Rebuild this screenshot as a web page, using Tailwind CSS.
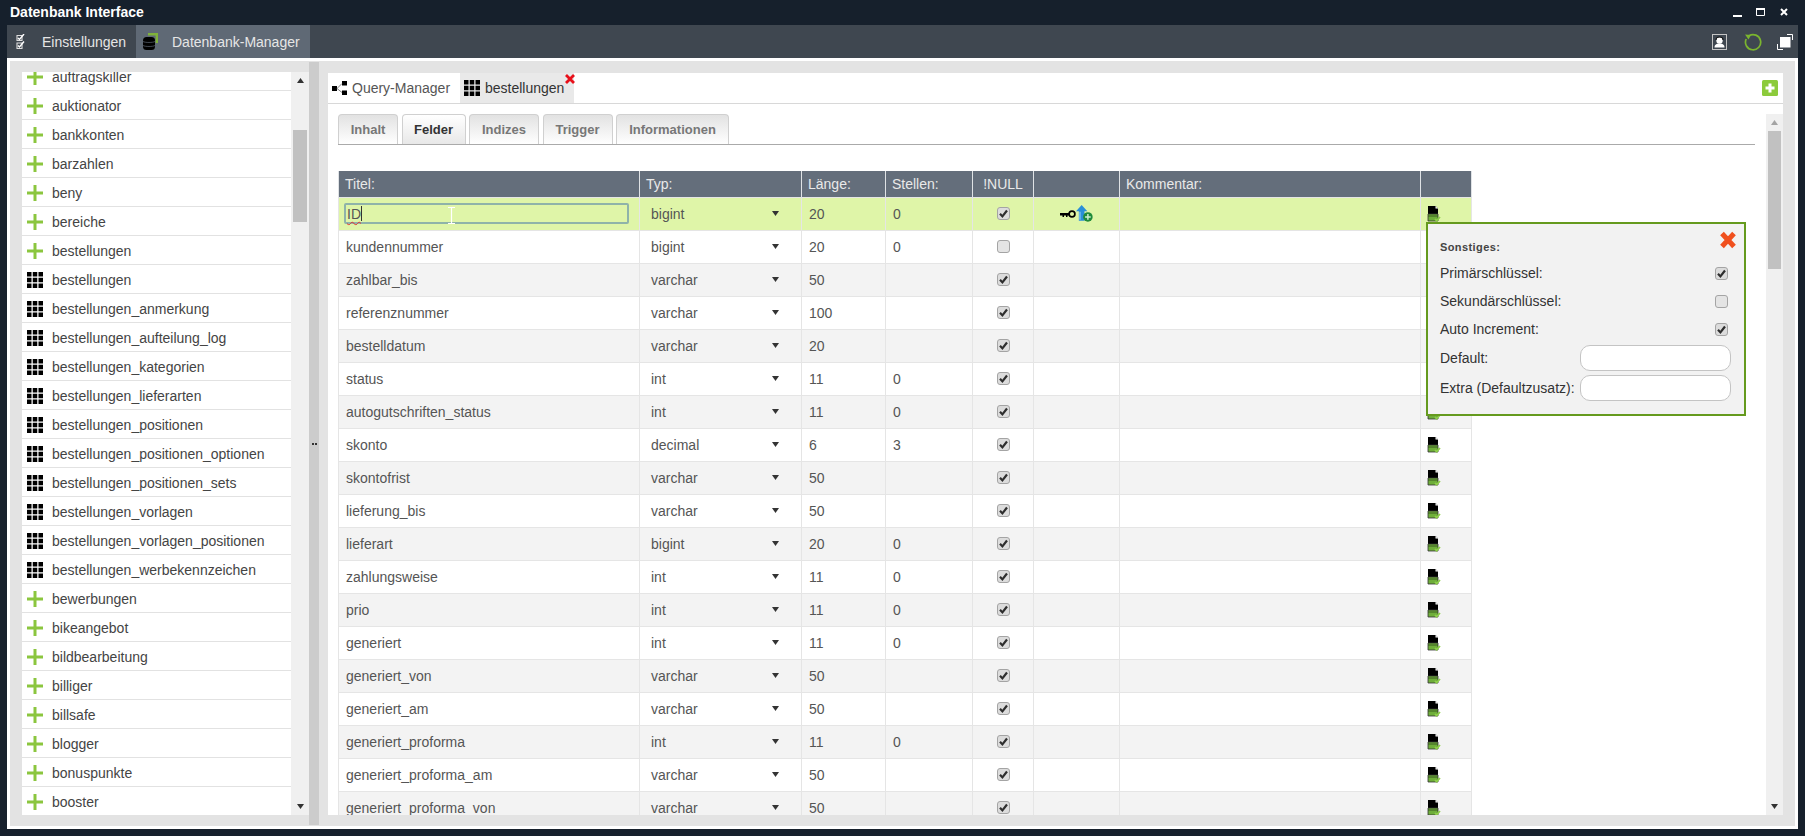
<!DOCTYPE html>
<html lang="de">
<head>
<meta charset="utf-8">
<title>Datenbank Interface</title>
<script src="https://cdn.jsdelivr.net/npm/@tailwindcss/browser@4"></script>
</head>
<body class="m-0 overflow-hidden">
<svg class="hidden" xmlns="http://www.w3.org/2000/svg">
  <symbol id="plus" viewBox="0 0 16 16"><path d="M6.500 0h3v6.500h6.500v3H9.500V16h-3V9.500H0v-3h6.500z" fill="#8bc63e"/></symbol>
  <symbol id="grid" viewBox="0 0 16 16"><path fill="#000" d="M0 0h4.500v4.500H0zM5.750 0h4.500v4.500h-4.500zM11.500 0H16v4.500h-4.500zM0 5.750h4.500v4.500H0zM5.750 5.750h4.500v4.500h-4.500zM11.500 5.750H16v4.500h-4.500zM0 11.500h4.500V16H0zM5.750 11.500h4.500V16h-4.500zM11.500 11.500H16V16h-4.500z"/></symbol>
  <symbol id="cb" viewBox="0 0 13 13"><rect x=".5" y=".5" width="12" height="12" rx="2.500" fill="#dcdcdc" stroke="#a4a4a4"/><path d="M3 6.800l2.400 2.600L10 3.500" fill="none" stroke="#2e2e2e" stroke-width="2.200"/></symbol>
  <symbol id="cb0" viewBox="0 0 13 13"><rect x=".5" y=".5" width="12" height="12" rx="2.500" fill="#e4e4e4" stroke="#a4a4a4"/></symbol>
  <symbol id="doc" viewBox="0 0 14 16"><path d="M1 0h7.500L11 2.500V8H1z" fill="#000"/><path d="M8.500 0L11 2.500H8.500z" fill="#fff"/><path d="M1 8h10v7H1z" fill="#6fae3a" stroke="#333" stroke-width=".8"/><path d="M1 10h10" stroke="#2d4a1a" stroke-width=".8"/><path d="M8 13l1.600 1.700L13 11" fill="none" stroke="#8ed04a" stroke-width="1.800"/></symbol>
  <symbol id="dn" viewBox="0 0 7 5"><path d="M0 0h7L3.500 5z" fill="#333"/></symbol>
</svg>

<div class="flex flex-col w-[1805px] h-[836px] bg-[#16202c] font-['Liberation_Sans',Arial,sans-serif] text-[14px] leading-none">

  <!-- title bar -->
  <header class="flex items-center justify-between h-[25px] pl-[10px] pb-[1px] shrink-0">
    <span class="text-white font-bold text-[14px]">Datenbank Interface</span>
    <div class="flex items-center gap-[14px] pr-[17px]">
      <svg class="w-[9px] h-[9px]" viewBox="0 0 9 9"><path d="M0 7h9v2H0z" fill="#fff"/></svg>
      <svg class="w-[9px] h-[8px]" viewBox="0 0 9 8"><path d="M.5 1h8v6.500h-8z" fill="none" stroke="#fff"/><path d="M0 0h9v2H0z" fill="#fff"/></svg>
      <svg class="w-[8px] h-[8px] ml-[1px]" viewBox="0 0 8 8"><path d="M1 1l6 6M7 1L1 7" stroke="#fff" stroke-width="2"/></svg>
    </div>
  </header>

  <!-- toolbar -->
  <nav class="flex items-stretch justify-between h-[33px] mx-[7px] bg-[#3f4750] shrink-0">
    <div class="flex items-stretch text-[#e6e6e6]">
      <div class="flex items-center w-[129px] pl-[9px] gap-[18px]">
        <svg class="w-[9px] h-[16px] shrink-0" viewBox="0 0 9 16"><path d="M1 1.500h5v5H1zM1 9h5v5.500H1z" fill="none" stroke="#ddd" stroke-width="1.100"/><path d="M2 4l1.500 1.500L8 0M2 11.500L3.500 13 8 7.500" fill="none" stroke="#fff" stroke-width="1.400"/></svg>
        <span class="ml-[-1px]">Einstellungen</span>
      </div>
      <div class="flex items-center w-[174px] pl-[7px] gap-[14px] bg-[#5f6975]">
        <svg class="w-[15px] h-[17px] shrink-0" viewBox="0 0 15 17"><path d="M5 1.200h8.800V10" fill="none" stroke="#7fb13a" stroke-width="2.400"/><rect x="0" y="4" width="12" height="13" rx="3.500" fill="#000"/><path d="M0 8.500c2 1.300 10 1.300 12 0M0 12.500c2 1.300 10 1.300 12 0" fill="none" stroke="#5f6975" stroke-width=".7"/></svg>
        <span>Datenbank-Manager</span>
      </div>
    </div>
    <div class="flex items-center pr-[5px]">
      <svg class="w-[15px] h-[16px]" viewBox="0 0 15 16"><rect x=".5" y=".5" width="14" height="15" fill="#3f4750" stroke="#c4c4c4"/><circle cx="7.500" cy="6.500" r="3.200" fill="#fff"/><path d="M2.500 13.500c0-3 2-4 5-4s5 1 5 4z" fill="#fff"/><path d="M4 6c0-4 7-4 7 0" fill="none" stroke="#111" stroke-width="1.200"/></svg>
      <svg class="w-[18px] h-[18px] ml-[17px]" viewBox="0 0 18 18"><path d="M5 2.800A7.600 7.600 0 1 1 2.200 6" fill="none" stroke="#7bb52f" stroke-width="1.700"/><path d="M1 1.500L7 2 4.500 6.500z" fill="#7bb52f"/></svg>
      <svg class="w-[16px] h-[16px] ml-[15px]" viewBox="0 0 16 16"><path d="M3 3h10.500v10.500H3z" fill="#fff"/><path d="M10 .5h5.500V6M.5 10v5.500H6" fill="none" stroke="#fff"/></svg>
    </div>
  </nav>

  <!-- main -->
  <main class="relative flex flex-1 min-h-0 mx-[7px] mb-[7px] border-[3px] border-white bg-[#e3e3e3] text-[#444]">

    <!-- left column -->
    <aside class="flex w-[299px] shrink-0 pl-[12px] py-[11px]">
      <ul class="w-[269px] h-[743px] overflow-hidden bg-white [&_li]:flex [&_li]:items-center [&_li]:h-[29px] [&_li]:border-b [&_li]:border-[#e2e2e2] [&_li]:pl-[5px] [&_li]:pt-[2px] [&_li]:gap-[9px] [&_svg]:size-[16px] [&_svg]:shrink-0 [&_span]:mt-[-1px]">
        <li class="mt-[-10px]"><svg><use href="#plus"/></svg><span>auftragskiller</span></li>
        <li><svg><use href="#plus"/></svg><span>auktionator</span></li>
        <li><svg><use href="#plus"/></svg><span>bankkonten</span></li>
        <li><svg><use href="#plus"/></svg><span>barzahlen</span></li>
        <li><svg><use href="#plus"/></svg><span>beny</span></li>
        <li><svg><use href="#plus"/></svg><span>bereiche</span></li>
        <li><svg><use href="#plus"/></svg><span>bestellungen</span></li>
        <li><svg><use href="#grid"/></svg><span>bestellungen</span></li>
        <li><svg><use href="#grid"/></svg><span>bestellungen_anmerkung</span></li>
        <li><svg><use href="#grid"/></svg><span>bestellungen_aufteilung_log</span></li>
        <li><svg><use href="#grid"/></svg><span>bestellungen_kategorien</span></li>
        <li><svg><use href="#grid"/></svg><span>bestellungen_lieferarten</span></li>
        <li><svg><use href="#grid"/></svg><span>bestellungen_positionen</span></li>
        <li><svg><use href="#grid"/></svg><span>bestellungen_positionen_optionen</span></li>
        <li><svg><use href="#grid"/></svg><span>bestellungen_positionen_sets</span></li>
        <li><svg><use href="#grid"/></svg><span>bestellungen_vorlagen</span></li>
        <li><svg><use href="#grid"/></svg><span>bestellungen_vorlagen_positionen</span></li>
        <li><svg><use href="#grid"/></svg><span>bestellungen_werbekennzeichen</span></li>
        <li><svg><use href="#plus"/></svg><span>bewerbungen</span></li>
        <li><svg><use href="#plus"/></svg><span>bikeangebot</span></li>
        <li><svg><use href="#plus"/></svg><span>bildbearbeitung</span></li>
        <li><svg><use href="#plus"/></svg><span>billiger</span></li>
        <li><svg><use href="#plus"/></svg><span>billsafe</span></li>
        <li><svg><use href="#plus"/></svg><span>blogger</span></li>
        <li><svg><use href="#plus"/></svg><span>bonuspunkte</span></li>
        <li><svg><use href="#plus"/></svg><span>booster</span></li>
      </ul>
      <div class="flex flex-col w-[18px] bg-[#f0f0f0] shrink-0">
        <div class="flex items-center justify-center h-[17px]"><svg class="w-[7px] h-[5px] rotate-180"><use href="#dn"/></svg></div>
        <div class="flex-1"><div class="w-[14px] h-[92px] mx-auto mt-[41px] bg-[#c1c1c1]"></div></div>
        <div class="flex items-center justify-center h-[17px]"><svg class="w-[7px] h-[5px]"><use href="#dn"/></svg></div>
      </div>
    </aside>

    <!-- splitter -->
    <div class="flex items-center justify-center w-[10px] my-[1px] bg-[#cccccc] shrink-0 text-[#333]">
      <svg class="w-[5px] h-[3px] mt-[1px]" viewBox="0 0 5 3"><path d="M0 0h2v2H0zM3 0h2v2H3z" fill="#333"/></svg>
    </div>

    <!-- right column -->
    <section class="flex flex-col w-[1455px] ml-[9px] mt-[12px] mb-[11px] bg-white min-h-0">
      <div class="flex items-stretch justify-between h-[31px] border-b border-[#d8d8d8] shrink-0">
        <div class="flex items-stretch">
          <div class="flex items-center w-[132px] pl-[4px] gap-[5px]">
            <svg class="w-[15px] h-[14px]" viewBox="0 0 15 14"><path d="M0 5h5v5H0zM10 0h5v4.500h-5zM10 9.500h5V14h-5z" fill="#000"/><path d="M5 7.500L10 2.500M5 7.500l5 4" stroke="#555" stroke-width=".7"/></svg>
            <span class="text-[#555]">Query-Manager</span>
          </div>
          <div class="relative flex items-center w-[114px] pl-[4px] gap-[5px] bg-[#e9e9e9]">
            <svg class="size-[16px]"><use href="#grid"/></svg>
            <span class="text-[#333]">bestellungen</span>
            <svg class="absolute top-[1px] right-[-1px] size-[10px]" viewBox="0 0 10 10"><path d="M1 1l8 8M9 1L1 9" stroke="#e8101a" stroke-width="2.800"/></svg>
          </div>
        </div>
        <div class="flex items-center pr-[5px]">
          <svg class="size-[16px]" viewBox="0 0 16 16"><rect width="16" height="16" rx="1.500" fill="#8ccb3b"/><path d="M6.500 3.500h3v3h3v3h-3v3h-3v-3h-3v-3h3z" fill="#fff"/></svg>
        </div>
      </div>

      <div class="flex flex-1 min-h-0">
        <div class="w-[1438px] pl-[10px] pr-[11px] pt-[10px] overflow-hidden">
          <!-- inner tabs -->
          <div class="flex items-stretch gap-[3.500px] h-[31px] border-b border-[#aaaaaa] font-bold text-[13px] text-[#777] [&>div]:flex [&>div]:items-center [&>div]:justify-center [&>div]:rounded-t-[4px] [&>div]:border [&>div]:border-b-0 [&>div]:border-[#d0d0d0] [&>div]:bg-gradient-to-b [&>div]:from-[#e2e2e2] [&>div]:to-white">
            <div class="w-[60px]">Inhalt</div>
            <div class="w-[64px] !from-white !to-[#e8e8e8] text-[#333]">Felder</div>
            <div class="w-[70px]">Indizes</div>
            <div class="w-[70px]">Trigger</div>
            <div class="w-[113px]">Informationen</div>
          </div>

          <!-- fields table -->
          <table class="mt-[26px] w-[1133px] table-fixed border-collapse text-[#555] [&_td]:border [&_td]:border-[#e5e5e5] [&_td]:px-[7px] [&_tbody_tr]:h-[33px] [&_tbody_tr:nth-child(odd)]:bg-[#f3f3f3] [&_th]:h-[26px] [&_th]:px-[6px] [&_th]:font-normal [&_th]:text-left [&_th]:bg-[#646e7b] [&_th]:text-[#e9e9e9] [&_th]:border-x [&_th]:border-[#dfe2e5]">
            <colgroup>
              <col class="w-[301px]"><col class="w-[162px]"><col class="w-[84px]"><col class="w-[87px]"><col class="w-[61px]"><col class="w-[86px]"><col class="w-[301px]"><col class="w-[51px]">
            </colgroup>
            <thead>
              <tr><th>Titel:</th><th>Typ:</th><th>Länge:</th><th>Stellen:</th><th class="!text-center">!NULL</th><th></th><th>Kommentar:</th><th></th></tr>
            </thead>
            <tbody>
              <tr class="!bg-[#dff5a8]">
                <td class="!px-[5px]"><div class="relative flex items-center w-[285px] h-[21px] border-2 border-[#8fb3a9] rounded-[2px] pl-[1px]"><span class="underline decoration-wavy decoration-[#d33] decoration-1 underline-offset-2 text-[#555]">ID</span><span class="w-[1px] h-[15px] bg-[#333]"></span><svg class="absolute left-[102px] top-[2px] w-[7px] h-[17px]" viewBox="0 0 7 17"><path d="M0 .5h7M0 16.500h7M3.500 .5v16" fill="none" stroke="#fff" stroke-width="1.200"/></svg></div></td>
                <td class="!pl-[11px]"><div class="flex items-center justify-between pr-[15px]"><span>bigint</span><svg class="w-[7px] h-[5px]"><use href="#dn"/></svg></div></td>
                <td>20</td><td>0</td>
                <td><svg class="block mx-auto size-[13px]"><use href="#cb"/></svg></td>
                <td class="!px-0"><div class="flex items-center justify-center pr-[1px]"><svg class="w-[16px] h-[10px]" viewBox="0 0 16 10"><path d="M0 4h9v2.500H7.500V8H6V6.500H4V8H2.500V6.500H0z" fill="#000"/><circle cx="12" cy="5" r="2.900" fill="none" stroke="#000" stroke-width="1.700"/></svg><svg class="w-[17px] h-[17px]" viewBox="0 0 15 15"><path d="M5 0l5 5.500H7.500V14h-5V5.500H0z" fill="#2a8fd8"/><path d="M3.500 6v7" stroke="#8fd0f5"/><circle cx="10.500" cy="10.500" r="4.200" fill="#1f8a3a"/><path d="M10.500 8v5M8 10.500h5" stroke="#cfeecf" stroke-width="1.300"/></svg></div></td>
                <td></td>
                <td><svg class="block ml-[-1px] w-[14px] h-[16px]"><use href="#doc"/></svg></td>
              </tr>
              <tr><td>kundennummer</td><td class="!pl-[11px]"><div class="flex items-center justify-between pr-[15px]"><span>bigint</span><svg class="w-[7px] h-[5px]"><use href="#dn"/></svg></div></td><td>20</td><td>0</td><td><svg class="block mx-auto size-[13px]"><use href="#cb0"/></svg></td><td></td><td></td><td><svg class="block ml-[-1px] w-[14px] h-[16px]"><use href="#doc"/></svg></td></tr>
              <tr><td>zahlbar_bis</td><td class="!pl-[11px]"><div class="flex items-center justify-between pr-[15px]"><span>varchar</span><svg class="w-[7px] h-[5px]"><use href="#dn"/></svg></div></td><td>50</td><td></td><td><svg class="block mx-auto size-[13px]"><use href="#cb"/></svg></td><td></td><td></td><td><svg class="block ml-[-1px] w-[14px] h-[16px]"><use href="#doc"/></svg></td></tr>
              <tr><td>referenznummer</td><td class="!pl-[11px]"><div class="flex items-center justify-between pr-[15px]"><span>varchar</span><svg class="w-[7px] h-[5px]"><use href="#dn"/></svg></div></td><td>100</td><td></td><td><svg class="block mx-auto size-[13px]"><use href="#cb"/></svg></td><td></td><td></td><td><svg class="block ml-[-1px] w-[14px] h-[16px]"><use href="#doc"/></svg></td></tr>
              <tr><td>bestelldatum</td><td class="!pl-[11px]"><div class="flex items-center justify-between pr-[15px]"><span>varchar</span><svg class="w-[7px] h-[5px]"><use href="#dn"/></svg></div></td><td>20</td><td></td><td><svg class="block mx-auto size-[13px]"><use href="#cb"/></svg></td><td></td><td></td><td><svg class="block ml-[-1px] w-[14px] h-[16px]"><use href="#doc"/></svg></td></tr>
              <tr><td>status</td><td class="!pl-[11px]"><div class="flex items-center justify-between pr-[15px]"><span>int</span><svg class="w-[7px] h-[5px]"><use href="#dn"/></svg></div></td><td>11</td><td>0</td><td><svg class="block mx-auto size-[13px]"><use href="#cb"/></svg></td><td></td><td></td><td><svg class="block ml-[-1px] w-[14px] h-[16px]"><use href="#doc"/></svg></td></tr>
              <tr><td>autogutschriften_status</td><td class="!pl-[11px]"><div class="flex items-center justify-between pr-[15px]"><span>int</span><svg class="w-[7px] h-[5px]"><use href="#dn"/></svg></div></td><td>11</td><td>0</td><td><svg class="block mx-auto size-[13px]"><use href="#cb"/></svg></td><td></td><td></td><td><svg class="block ml-[-1px] w-[14px] h-[16px]"><use href="#doc"/></svg></td></tr>
              <tr><td>skonto</td><td class="!pl-[11px]"><div class="flex items-center justify-between pr-[15px]"><span>decimal</span><svg class="w-[7px] h-[5px]"><use href="#dn"/></svg></div></td><td>6</td><td>3</td><td><svg class="block mx-auto size-[13px]"><use href="#cb"/></svg></td><td></td><td></td><td><svg class="block ml-[-1px] w-[14px] h-[16px]"><use href="#doc"/></svg></td></tr>
              <tr><td>skontofrist</td><td class="!pl-[11px]"><div class="flex items-center justify-between pr-[15px]"><span>varchar</span><svg class="w-[7px] h-[5px]"><use href="#dn"/></svg></div></td><td>50</td><td></td><td><svg class="block mx-auto size-[13px]"><use href="#cb"/></svg></td><td></td><td></td><td><svg class="block ml-[-1px] w-[14px] h-[16px]"><use href="#doc"/></svg></td></tr>
              <tr><td>lieferung_bis</td><td class="!pl-[11px]"><div class="flex items-center justify-between pr-[15px]"><span>varchar</span><svg class="w-[7px] h-[5px]"><use href="#dn"/></svg></div></td><td>50</td><td></td><td><svg class="block mx-auto size-[13px]"><use href="#cb"/></svg></td><td></td><td></td><td><svg class="block ml-[-1px] w-[14px] h-[16px]"><use href="#doc"/></svg></td></tr>
              <tr><td>lieferart</td><td class="!pl-[11px]"><div class="flex items-center justify-between pr-[15px]"><span>bigint</span><svg class="w-[7px] h-[5px]"><use href="#dn"/></svg></div></td><td>20</td><td>0</td><td><svg class="block mx-auto size-[13px]"><use href="#cb"/></svg></td><td></td><td></td><td><svg class="block ml-[-1px] w-[14px] h-[16px]"><use href="#doc"/></svg></td></tr>
              <tr><td>zahlungsweise</td><td class="!pl-[11px]"><div class="flex items-center justify-between pr-[15px]"><span>int</span><svg class="w-[7px] h-[5px]"><use href="#dn"/></svg></div></td><td>11</td><td>0</td><td><svg class="block mx-auto size-[13px]"><use href="#cb"/></svg></td><td></td><td></td><td><svg class="block ml-[-1px] w-[14px] h-[16px]"><use href="#doc"/></svg></td></tr>
              <tr><td>prio</td><td class="!pl-[11px]"><div class="flex items-center justify-between pr-[15px]"><span>int</span><svg class="w-[7px] h-[5px]"><use href="#dn"/></svg></div></td><td>11</td><td>0</td><td><svg class="block mx-auto size-[13px]"><use href="#cb"/></svg></td><td></td><td></td><td><svg class="block ml-[-1px] w-[14px] h-[16px]"><use href="#doc"/></svg></td></tr>
              <tr><td>generiert</td><td class="!pl-[11px]"><div class="flex items-center justify-between pr-[15px]"><span>int</span><svg class="w-[7px] h-[5px]"><use href="#dn"/></svg></div></td><td>11</td><td>0</td><td><svg class="block mx-auto size-[13px]"><use href="#cb"/></svg></td><td></td><td></td><td><svg class="block ml-[-1px] w-[14px] h-[16px]"><use href="#doc"/></svg></td></tr>
              <tr><td>generiert_von</td><td class="!pl-[11px]"><div class="flex items-center justify-between pr-[15px]"><span>varchar</span><svg class="w-[7px] h-[5px]"><use href="#dn"/></svg></div></td><td>50</td><td></td><td><svg class="block mx-auto size-[13px]"><use href="#cb"/></svg></td><td></td><td></td><td><svg class="block ml-[-1px] w-[14px] h-[16px]"><use href="#doc"/></svg></td></tr>
              <tr><td>generiert_am</td><td class="!pl-[11px]"><div class="flex items-center justify-between pr-[15px]"><span>varchar</span><svg class="w-[7px] h-[5px]"><use href="#dn"/></svg></div></td><td>50</td><td></td><td><svg class="block mx-auto size-[13px]"><use href="#cb"/></svg></td><td></td><td></td><td><svg class="block ml-[-1px] w-[14px] h-[16px]"><use href="#doc"/></svg></td></tr>
              <tr><td>generiert_proforma</td><td class="!pl-[11px]"><div class="flex items-center justify-between pr-[15px]"><span>int</span><svg class="w-[7px] h-[5px]"><use href="#dn"/></svg></div></td><td>11</td><td>0</td><td><svg class="block mx-auto size-[13px]"><use href="#cb"/></svg></td><td></td><td></td><td><svg class="block ml-[-1px] w-[14px] h-[16px]"><use href="#doc"/></svg></td></tr>
              <tr><td>generiert_proforma_am</td><td class="!pl-[11px]"><div class="flex items-center justify-between pr-[15px]"><span>varchar</span><svg class="w-[7px] h-[5px]"><use href="#dn"/></svg></div></td><td>50</td><td></td><td><svg class="block mx-auto size-[13px]"><use href="#cb"/></svg></td><td></td><td></td><td><svg class="block ml-[-1px] w-[14px] h-[16px]"><use href="#doc"/></svg></td></tr>
              <tr><td>generiert_proforma_von</td><td class="!pl-[11px]"><div class="flex items-center justify-between pr-[15px]"><span>varchar</span><svg class="w-[7px] h-[5px]"><use href="#dn"/></svg></div></td><td>50</td><td></td><td><svg class="block mx-auto size-[13px]"><use href="#cb"/></svg></td><td></td><td></td><td><svg class="block ml-[-1px] w-[14px] h-[16px]"><use href="#doc"/></svg></td></tr>
            </tbody>
          </table>
        </div>

        <!-- right scrollbar -->
        <div class="flex flex-col w-[17px] mt-[10px] bg-[#f0f0f0] shrink-0">
          <div class="flex items-center justify-center h-[17px]"><svg class="w-[7px] h-[5px] rotate-180 opacity-40"><use href="#dn"/></svg></div>
          <div class="flex-1"><div class="w-[13px] h-[138px] mx-auto bg-[#c1c1c1]"></div></div>
          <div class="flex items-center justify-center h-[17px]"><svg class="w-[7px] h-[5px]"><use href="#dn"/></svg></div>
        </div>
      </div>
    </section>

    <!-- field options popup -->
    <div class="absolute left-[1416px] top-[161px] w-[320px] h-[194px] border-2 border-[#659a1e] bg-[#f2f2f2] pl-[12px] pr-[13px] pt-[7px] text-[#333]">
      <div class="relative flex items-center justify-between h-[28px]">
        <span class="font-bold text-[11px] text-[#444] pt-[4px] tracking-[0.4px]">Sonstiges:</span>
        <svg class="absolute right-[-5px] top-[0px] w-[16px] h-[18px]" viewBox="0 0 16 18"><path d="M2 2.500L14 15.500M14 2.500L2 15.500" stroke="#f0501e" stroke-width="5"/></svg>
      </div>
      <div class="flex items-center justify-between h-[28px] pr-[3px]"><span>Primärschlüssel:</span><svg class="size-[13px]"><use href="#cb"/></svg></div>
      <div class="flex items-center justify-between h-[28px] pr-[3px]"><span>Sekundärschlüssel:</span><svg class="size-[13px]"><use href="#cb0"/></svg></div>
      <div class="flex items-center justify-between h-[28px] pr-[3px]"><span>Auto Increment:</span><svg class="size-[13px]"><use href="#cb"/></svg></div>
      <div class="flex items-center justify-between h-[30px]"><span>Default:</span><div class="w-[151px] h-[26px] rounded-[10px] border border-[#c4c4c4] bg-white"></div></div>
      <div class="flex items-center justify-between h-[30px]"><span>Extra (Defaultzusatz):</span><div class="w-[151px] h-[26px] rounded-[10px] border border-[#c4c4c4] bg-white"></div></div>
    </div>
  </main>
</div>
</body>
</html>
